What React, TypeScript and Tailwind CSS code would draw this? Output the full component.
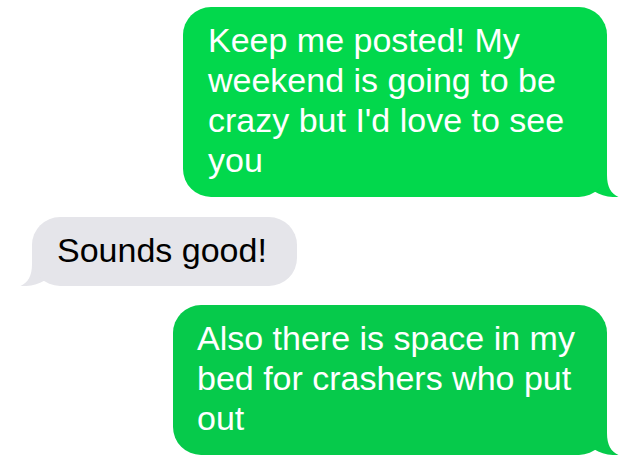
import React from "react";

function Tail({ color, side }: { color: string; side: "left" | "right" }) {
  return (
    <svg
      width="36"
      height="36"
      viewBox="0 0 36 36"
      className={
        side === "right"
          ? "absolute bottom-0 right-[-12px]"
          : "absolute bottom-0 left-[-12px] -scale-x-100"
      }
    >
      <path
        d="M0 0 H24 V14 C24 26 28 32.5 35.5 36 C27 36.6 18 34.5 11 30.2 L0 31 Z"
        fill={color}
      />
    </svg>
  );
}

export default function App() {
  return (
    <div
      className="w-[640px] h-[462px] bg-white overflow-hidden flex flex-col pt-[7px]"
      style={{ fontFamily: '"Liberation Sans", Arial, sans-serif' }}
    >
      <div className="flex justify-end pr-[33px]">
        <div className="relative w-[424px] h-[190px]">
          <div className="relative z-10 h-full rounded-[28px] bg-[#02d84c] pl-[25px] pt-[13px] text-[34px] leading-[40px] text-white whitespace-nowrap">
            Keep me posted! My
            <br />
            weekend is going to be
            <br />
            crazy but I'd love to see
            <br />
            you
          </div>
          <Tail color="#02d84c" side="right" />
        </div>
      </div>

      <div className="flex justify-start pl-[32px] mt-[20px]">
        <div className="relative w-[265px] h-[69px]">
          <div className="relative z-10 h-full rounded-[28px] bg-[#e5e5ea] pl-[25px] pt-[13px] text-[34px] leading-[40px] text-black whitespace-nowrap">
            Sounds good!
          </div>
          <Tail color="#e5e5ea" side="left" />
        </div>
      </div>

      <div className="flex justify-end pr-[33px] mt-[19px]">
        <div className="relative w-[434px] h-[150px]">
          <div className="relative z-10 h-full rounded-[28px] bg-[#06ca4b] pl-[24px] pt-[13px] text-[34px] leading-[40px] text-white whitespace-nowrap">
            Also there is space in my
            <br />
            bed for crashers who put
            <br />
            out
          </div>
          <Tail color="#06ca4b" side="right" />
        </div>
      </div>
    </div>
  );
}
